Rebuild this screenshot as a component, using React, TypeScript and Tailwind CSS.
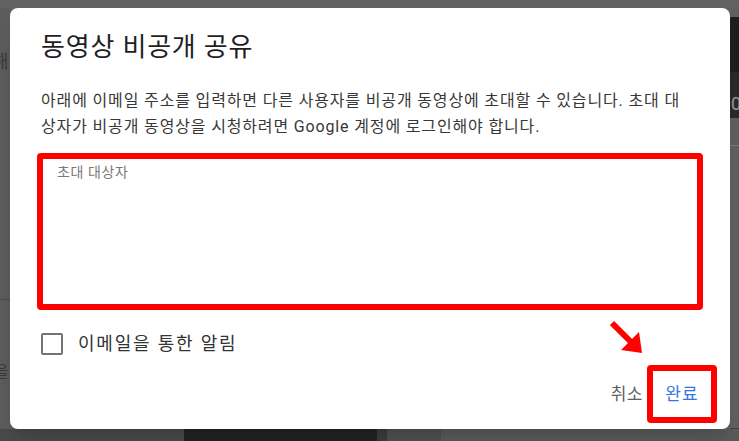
import { useState } from 'react';

const font = { fontFamily: 'Roboto, "Noto Sans CJK KR", "Noto Sans", sans-serif' };

export default function App() {
  const [notify, setNotify] = useState<boolean>(false);
  const [invitees, setInvitees] = useState<string>('');

  return (
    <div
      className="w-[739px] h-[441px] bg-[#5f5f5f] flex flex-col overflow-hidden"
      style={font}
    >
      <div className="h-[8px] bg-[#626262]" />
      <div className="flex h-[421px]">
        {/* page behind the overlay, left edge */}
        <div className="w-[10px] flex flex-col overflow-hidden bg-[#5c5c5c]">
          <div className="h-[42px]" />
          <span className="-ml-[8px] text-[18px] leading-[24px] text-[#3a3a3a]">해</span>
          <div className="h-[226px] border-b border-[#4a4a4a]" />
          <span className="mt-[62px] -ml-[6px] text-[16px] leading-[20px] text-[#3a3a3a]">을</span>
        </div>

        <div className="relative w-[720px] bg-white rounded-[8px] shadow-xl flex flex-col pt-[23px] pl-[27px] pr-[13px] pb-[6px]">
          <h1 className="ml-[4px] text-[26px] leading-[32px] tracking-[0.8px] text-[#1f1f1f] font-normal">
            동영상 비공개 공유
          </h1>

          <p className="ml-[4px] mt-[25px] text-[16px] leading-[26px] tracking-[0.85px] text-[#383838] whitespace-nowrap">
            아래에 이메일 주소를 입력하면 다른 사용자를 비공개 동영상에 초대할 수 있습니다. 초대 대
            <br />
            상자가 비공개 동영상을 시청하려면 Google 계정에 로그인해야 합니다.
          </p>

          <div className="mt-[13px] w-[666px] h-[157px] border-[6px] border-[#ff0000] rounded-[4px] px-[14px] py-[2px]">
            <textarea
              value={invitees}
              onChange={(e) => setInvitees(e.target.value)}
              placeholder="초대 대상자"
              className="w-full h-full resize-none outline-none text-[14px] leading-[22px] tracking-[0.6px] text-[#333] placeholder:text-[#7a7a7a]"
              style={font}
            />
          </div>

          <label className="mt-[22px] ml-[4px] flex items-center gap-[15px] h-[24px] cursor-pointer">
            <span
              onClick={() => setNotify(!notify)}
              className="w-[22px] h-[22px] border-2 border-[#737373] rounded-[2px] flex items-center justify-center"
            >
              {notify && (
                <svg width="16" height="16" viewBox="0 0 24 24">
                  <path d="M4 12l5 5L20 6" fill="none" stroke="#606060" strokeWidth="3" />
                </svg>
              )}
            </span>
            <span className="text-[18px] leading-[24px] tracking-[1.8px] text-[#333]">
              이메일을 통한 알림
            </span>
          </label>

          <div className="mt-auto flex justify-end items-center gap-[4px]">
            <button className="text-[17px] leading-[24px] tracking-[0.5px] text-[#606060]">취소</button>
            <button className="w-[70px] h-[58px] border-[6px] border-[#ff0000] rounded-[4px] flex items-center justify-center text-[17px] leading-[24px] tracking-[1px] text-[#3574e0]">
              완료
            </button>
          </div>

          {/* annotation arrow */}
          <svg
            className="absolute left-[600px] top-[312px]"
            width="40"
            height="40"
            viewBox="0 0 40 40"
          >
            <line x1="2" y1="3" x2="22" y2="23" stroke="#ff0000" strokeWidth="6" />
            <polygon points="11,30 32,33 29,12" fill="#ff0000" />
          </svg>
        </div>

        {/* page behind the overlay, right edge */}
        <div className="w-[9px] flex flex-col overflow-hidden">
          <div className="h-[9px] bg-[#5f5f5f]" />
          <div className="h-[55px] bg-[#1e1e1e]" />
          <div className="h-[46px] bg-[#2a2a2a] overflow-hidden">
            <span className="block mt-[20px] ml-[1px] text-[18px] leading-[24px] text-[#9a9a9a]">0</span>
          </div>
          <div className="h-[28px] bg-[#5f5f5f] border-b border-[#7a7a7a]" />
          <div className="flex-1 bg-[#606060] border-b border-[#3f3f3f]" />
        </div>
      </div>
      <div className="h-[12px] flex">
        <div className="w-[184px] bg-[#4a4a4a]" />
        <div className="w-[193px] bg-[#232323]" />
        <div className="w-[10px] bg-[#3c3c3c]" />
        <div className="w-[54px] bg-[#505050]" />
        <div className="flex-1 bg-[#5a5a5a]" />
      </div>
    </div>
  );
}
